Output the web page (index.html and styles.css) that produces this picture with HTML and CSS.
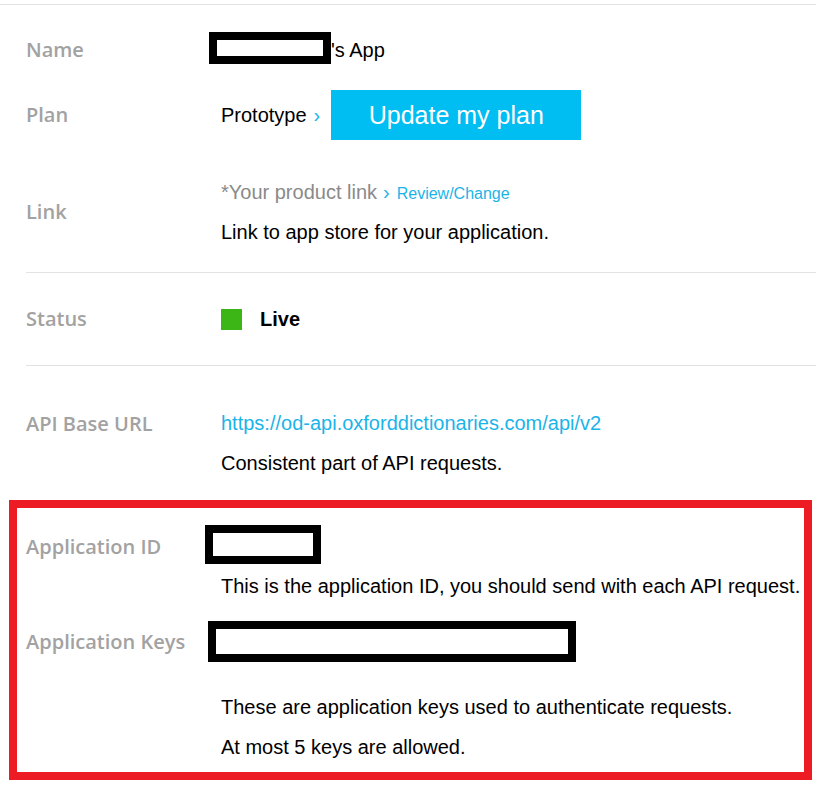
FILE: index.html
```html
<!DOCTYPE html>
<html>
<head>
<meta charset="utf-8">
<link rel="stylesheet" href="styles.css">
</head>
<body>
<div class="topline"></div>
<div class="page">
  <section class="section sec-main">
    <div class="row row-name">
      <div class="label">Name</div>
      <div class="value value-flex"><span class="redact redact-name"></span><span>'s App</span></div>
    </div>
    <div class="row row-plan">
      <div class="label">Plan</div>
      <div class="value value-flex"><span>Prototype</span><span class="chev">›</span><a class="btn">Update my plan</a></div>
    </div>
    <div class="row row-link">
      <div class="label">Link</div>
      <div class="value">
        <div class="line"><span class="muted">*Your product link</span><span class="chev chev-small">›</span><a class="small-link">Review/Change</a></div>
        <div class="line">Link to app store for your application.</div>
      </div>
    </div>
  </section>
  <section class="section sec-status">
    <div class="row">
      <div class="label">Status</div>
      <div class="value value-flex"><span class="dot"></span><strong class="live">Live</strong></div>
    </div>
  </section>
  <section class="section sec-api">
    <div class="row row-top">
      <div class="label">API Base URL</div>
      <div class="value">
        <div class="line"><a class="url">https://od-api.oxforddictionaries.com/api/v2</a></div>
        <div class="line">Consistent part of API requests.</div>
      </div>
    </div>
  </section>
</div>
<div class="highlight">
  <div class="row row-top row-appid">
    <div class="label">Application ID</div>
    <div class="value">
      <span class="redact redact-id"></span>
      <div class="line line-after-id">This is the application ID, you should send with each API request.</div>
    </div>
  </div>
  <div class="row row-top row-keys">
    <div class="label">Application Keys</div>
    <div class="value">
      <span class="redact redact-keys"></span>
      <div class="line line-after-keys">These are application keys used to authenticate requests.</div>
      <div class="line">At most 5 keys are allowed.</div>
    </div>
  </div>
</div>
</body>
</html>
```

FILE: styles.css
```css
html, body {
  margin: 0;
  padding: 0;
  background: #ffffff;
}
body {
  font-family: "Liberation Sans", Arial, sans-serif;
  font-size: 20px;
  color: #000;
  width: 816px;
  overflow: hidden;
}
.topline {
  height: 1px;
  background: #e3e3e3;
  margin-top: 4px;
}
.page {
  padding-left: 26px;
}
.section {
  border-bottom: 1px solid #e2e2e2;
}
.sec-main {
  padding-top: 25px;
  padding-bottom: 20px;
}
.sec-status {
  padding-top: 26px;
  padding-bottom: 26px;
}
.sec-api {
  border-bottom: none;
  padding-top: 37px;
}
.row {
  display: grid;
  grid-template-columns: 195px 1fr;
  align-items: center;
}
.row-top {
  align-items: start;
}
.label {
  font-family: "Open Sans", sans-serif;
  font-weight: 600;
  font-size: 20px;
  color: #a2a2a2;
  line-height: 40px;
}
.sec-api .label {
  margin-top: 1px;
}
.value {
  line-height: 40px;
}
.value-flex {
  display: flex;
  align-items: center;
  height: 40px;
}
.line {
  line-height: 40px;
  height: 40px;
  white-space: nowrap;
}
.row-name {
  height: 40px;
}
.row-plan {
  margin-top: 20px;
  height: 50px;
}
.row-plan .value-flex {
  height: 50px;
}
.row-link {
  margin-top: 32px;
}
.redact {
  display: block;
  box-sizing: border-box;
  border: 8px solid #000;
  background: #fff;
}
.redact-name {
  width: 122px;
  height: 32px;
  margin-left: -12px;
  margin-bottom: 4px;
}
.chev {
  color: #1ab4e8;
  margin-left: 7px;
}
.chev-small {
  margin-left: 6px;
  margin-right: 7px;
}
.btn {
  display: inline-flex;
  align-items: center;
  justify-content: center;
  width: 250px;
  height: 50px;
  margin-left: 11px;
  background: #00bdf2;
  color: #fff;
  font-size: 25px;
}
.muted {
  color: #8a8a8a;
}
.small-link {
  color: #1ab4e8;
  font-size: 16px;
}
.url {
  color: #1ab4e8;
}
.dot {
  display: block;
  width: 21px;
  height: 21px;
  background: #3cb516;
}
.live {
  margin-left: 18px;
  font-weight: 700;
}
.highlight {
  margin-top: 17px;
  margin-left: 9px;
  width: 803px;
  height: 280px;
  box-sizing: border-box;
  border: 8px solid #ed1c24;
  padding: 17px 0 0 9px;
}
.row-appid .label {
  margin-top: 2px;
}
.redact-id {
  width: 116px;
  height: 39px;
  margin-left: -16px;
}
.line-after-id {
  margin-top: 2px;
}
.row-keys {
  margin-top: 15px;
}
.row-keys .label {
  margin-top: 1px;
}
.redact-keys {
  width: 368px;
  height: 41px;
  margin-left: -13px;
}
.line-after-keys {
  margin-top: 25px;
}
```
